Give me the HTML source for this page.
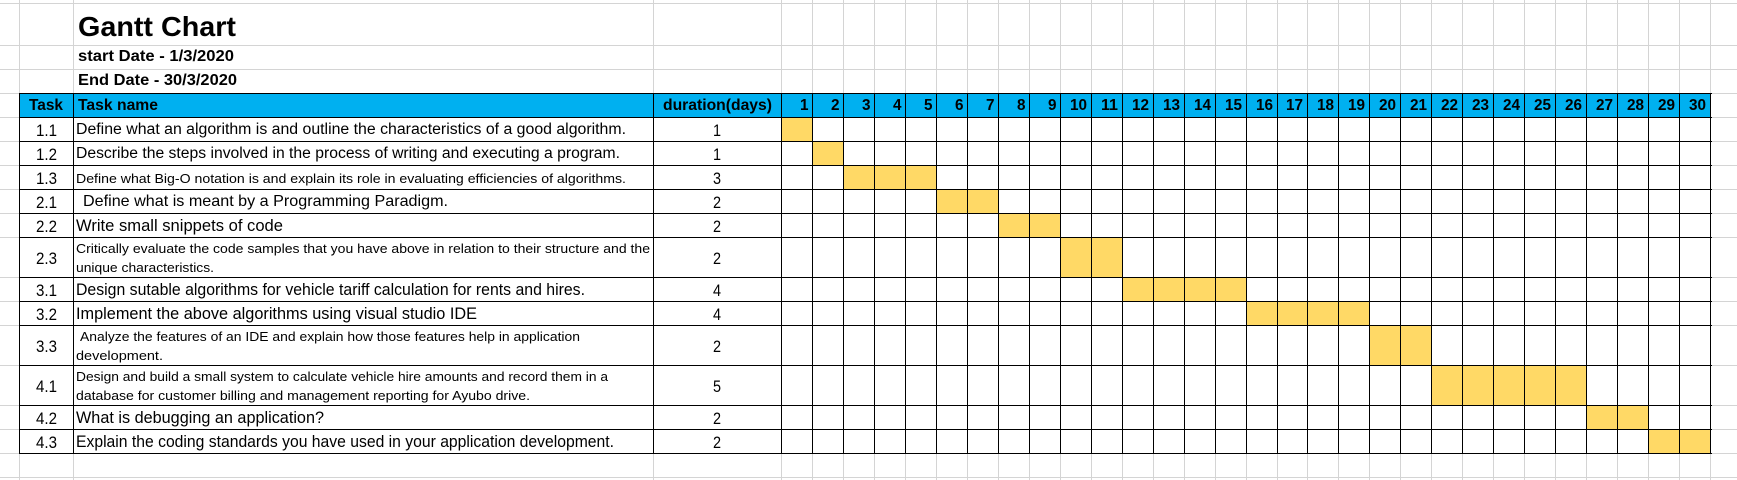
<!DOCTYPE html>
<html><head><meta charset="utf-8">
<style>
html,body{margin:0;padding:0;background:#fff;}
body{width:1737px;height:480px;position:relative;overflow:hidden;font-family:"Liberation Sans",sans-serif;color:#000;}
.a{position:absolute;}
.t{position:absolute;white-space:nowrap;transform-origin:0 50%;line-height:1;}
</style></head><body>
<div id="g"></div>
<script>
var g=document.getElementById('g');
function box(x,y,w,h,c){var d=document.createElement('div');d.className='a';d.style.cssText='left:'+x+'px;top:'+y+'px;width:'+w+'px;height:'+h+'px;background:'+c;g.appendChild(d);return d;}
function txt(s,x,y,fs,bold,w,align,cw,sx){var d=document.createElement('div');d.className='t';d.textContent=s;d.style.fontSize=fs+'px';if(bold)d.style.fontWeight='bold';g.appendChild(d);var r=d.getBoundingClientRect();var nw=r.width,nh=r.height;var sc=w?w/nw:(sx||0.88);d.style.transform='scaleX('+sc+')';var rw=nw*sc;var lx=x;if(align=='c')lx=x+(cw-rw)/2;else if(align=='r')lx=x+cw-rw;d.style.left=lx+'px';d.style.top=(y-nh/2)+'px';return d;}
var X=[0,19,73,653,781];for(var i=1;i<=30;i++)X.push(Math.round(781+i*30.97));
var Y=[3,45,69,93,117,141,165,189,213,237,277,301,325,365,405,429,453,477];
X.forEach(function(x){if(x>0)box(x,0,1,480,'#d4d4d4');});
Y.forEach(function(y){box(0,y,1737,1,'#d4d4d4');});
box(19,93,1711-19,453-93,'#fff');
box(19,93,1711-19,24,'#00B0F0');
var rows=[[1,1],[2,1],[3,3],[6,2],[8,2],[10,2],[12,4],[16,4],[20,2],[22,5],[27,2],[29,2]];
rows.forEach(function(r,i){var y0=Y[4+i],y1=Y[5+i];var xs=X[4+r[0]-1],xe=X[4+r[0]-1+r[1]];box(xs,y0,xe-xs,y1-y0,'#FFD966');});
for(var i=1;i<X.length;i++)box(X[i],93,1,360+1,'#000');
for(var j=3;j<Y.length-1;j++)box(19,Y[j],1711-19+1,1,'#000');
txt('Gantt Chart',78,27,28,true,158);
txt('start Date - 1/3/2020',78,57,16,true,156);
txt('End Date - 30/3/2020',78,81,16,true,159);
txt('Task',19,106,16,true,34,'c',54);
txt('Task name',78,106,16,true,80);
txt('duration(days)',653,106,16,true,109,'c',128);
for(var i=1;i<=30;i++)txt(String(i),X[3+i],106,16,true,i<10?8.5:17,'r',X[4+i]-X[3+i]-4);
var data=[
['1.1',['Define what an algorithm is and outline the characteristics of a good algorithm.'],15.5,[550],76,'1'],
['1.2',['Describe the steps involved in the process of writing and executing a program.'],15.5,[544],76,'1'],
['1.3',['Define what Big-O notation is and explain its role in evaluating efficiencies of algorithms.'],13,[550],76,'3'],
['2.1',['Define what is meant by a Programming Paradigm.'],16,[365],83,'2'],
['2.2',['Write small snippets of code'],16.5,[207],76,'2'],
['2.3',['Critically evaluate the code samples that you have above in relation to their structure and the','unique characteristics.'],13,[574,138],76,'2'],
['3.1',['Design sutable algorithms for vehicle tariff calculation for rents and hires.'],16.5,[509],76,'4'],
['3.2',['Implement the above algorithms using visual studio IDE'],16.5,[401],76,'4'],
['3.3',['Analyze the features of an IDE and explain how those features help in application','development.'],13,[500,87],[80,76],'2'],
['4.1',['Design and build a small system to calculate vehicle hire amounts and record them in a','database for customer billing and management reporting for Ayubo drive.'],13,[532,454],76,'5'],
['4.2',['What is debugging an application?'],16.5,[248],76,'2'],
['4.3',['Explain the coding standards you have used in your application development.'],16.5,[538],76,'2']
];
data.forEach(function(d,i){var y0=Y[4+i],y1=Y[5+i],cy=(y0+y1)/2+1;
 txt(d[0],19,cy,17,false,21,'c',54);
 txt(d[5],653,cy,17,false,null,'c',128,0.85);
 if(d[1].length==1){txt(d[1][0],d[4],cy,d[2],false,d[3][0]);}
 else{var xs=Array.isArray(d[4])?d[4]:[d[4],d[4]];txt(d[1][0],xs[0],y0+11,d[2],false,d[3][0]);txt(d[1][1],xs[1],y0+30,d[2],false,d[3][1]);}
});
</script>
</body></html>
